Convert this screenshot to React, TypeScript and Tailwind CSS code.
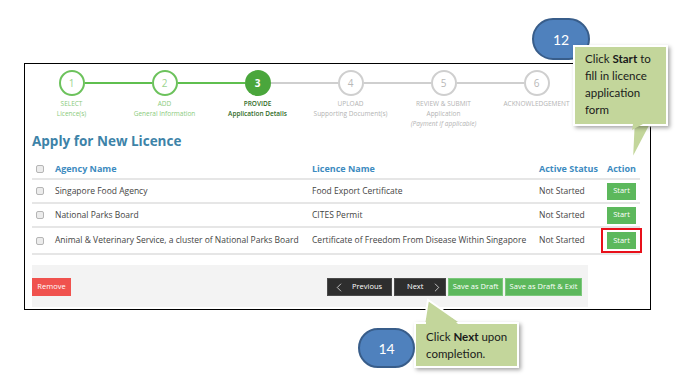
import { ChevronLeft, ChevronRight } from "lucide-react";

interface Step {
  num: number;
  lines: string[];
  note?: string;
  state: "done" | "active" | "todo";
}

interface Licence {
  agency: string;
  licence: string;
  status: string;
}

const steps: Step[] = [
  { num: 1, lines: ["SELECT", "Licence(s)"], state: "done" },
  { num: 2, lines: ["ADD", "General Information"], state: "done" },
  { num: 3, lines: ["PROVIDE", "Application Details"], state: "active" },
  { num: 4, lines: ["UPLOAD", "Supporting Document(s)"], state: "todo" },
  { num: 5, lines: ["REVIEW & SUBMIT", "Application"], note: "(Payment if applicable)", state: "todo" },
  { num: 6, lines: ["ACKNOWLEDGEMENT"], state: "todo" },
];

const licences: Licence[] = [
  { agency: "Singapore Food Agency", licence: "Food Export Certificate", status: "Not Started" },
  { agency: "National Parks Board", licence: "CITES Permit", status: "Not Started" },
  {
    agency: "Animal & Veterinary Service, a cluster of National Parks Board",
    licence: "Certificate of Freedom From Disease Within Singapore",
    status: "Not Started",
  },
];

function Checkbox() {
  return <span className="block w-[8px] h-[8px] rounded-[2px] border border-[#b5b5b5] bg-[#ececec]" />;
}

function StepItem({ step, index }: { step: Step; index: number }) {
  const leftGreen = index <= 2;
  const rightGreen = index <= 1;
  return (
    <div className="w-[93px] flex flex-col items-center">
      <div className="w-full flex items-center">
        <div className={`flex-1 h-[2px] ${index === 0 ? "" : leftGreen ? "bg-[#5fbf4f]" : "bg-[#cfcfcf]"}`} />
        <div
          className={`w-[26px] h-[26px] rounded-full flex items-center justify-center text-[10px] ${
            step.state === "active"
              ? "bg-[#4aa63c] text-white font-bold"
              : step.state === "done"
              ? "border-2 border-[#6cc25c] text-[#9bd48e] bg-white"
              : "border-2 border-[#cfcfcf] text-[#b8b8b8] bg-white"
          }`}
        >
          {step.num}
        </div>
        <div className={`flex-1 h-[2px] ${index === 5 ? "" : rightGreen ? "bg-[#5fbf4f]" : "bg-[#cfcfcf]"}`} />
      </div>
      <div
        className={`mt-[3px] text-[6.5px] leading-[10px] text-center whitespace-nowrap ${
          step.state === "active" ? "text-[#2f6b27] font-semibold" : step.state === "done" ? "text-[#8acb7c]" : "text-[#b3b3b3]"
        }`}
      >
        {step.lines.map((l) => (
          <div key={l}>{l}</div>
        ))}
        {step.note && <div className="italic">{step.note}</div>}
      </div>
    </div>
  );
}

function StartButton() {
  return (
    <span className="inline-flex items-center justify-center w-[29px] h-[17px] bg-[#5cb85c] text-white text-[7.5px] align-middle">
      Start
    </span>
  );
}

function App() {
  return (
    <div className="relative w-[686px] h-[386px] bg-white font-['Open_Sans',sans-serif] overflow-hidden">
      <div className="pt-[63px] pl-[24px]">
        <div className="w-[627px] h-[247px] border-[1.5px] border-black">
          <div className="flex pt-[6px]">
            {steps.map((s, i) => (
              <StepItem key={s.num} step={s} index={i} />
            ))}
          </div>

          <div className="pl-[7px] pr-[8px]">
            <h1 className="mt-[3px] text-[13.5px] leading-[18px] font-bold text-[#3d83a8]">Apply for New Licence</h1>

            <table className="mt-[9px] w-[608px] table-fixed text-[8.5px] text-[#444] border-collapse">
              <colgroup>
                <col className="w-[23px]" />
                <col className="w-[257px]" />
                <col className="w-[227px]" />
                <col className="w-[68px]" />
                <col className="w-[33px]" />
              </colgroup>
              <thead>
                <tr className="h-[20px] border-b-2 border-[#e6e6e6] text-[9px] font-bold text-[#3d8bc0] text-left">
                  <th className="pl-[4px]">
                    <Checkbox />
                  </th>
                  <th>Agency Name</th>
                  <th>Licence Name</th>
                  <th className="whitespace-nowrap">Active Status</th>
                  <th>Action</th>
                </tr>
              </thead>
              <tbody>
                {licences.map((row, i) => (
                  <tr key={i} className="h-[24px] border-b-2 border-[#e6e6e6]">
                    <td className="pl-[4px]">
                      <Checkbox />
                    </td>
                    <td className="whitespace-nowrap">{row.agency}</td>
                    <td className="whitespace-nowrap">{row.licence}</td>
                    <td className="whitespace-nowrap">{row.status}</td>
                    <td className="whitespace-nowrap">
                      {i === 2 ? (
                        <span className="inline-block -ml-[6px] pl-[4px] pr-[4px] pt-[2px] pb-[2px] border-2 border-[#e8101a]">
                          <StartButton />
                        </span>
                      ) : (
                        <StartButton />
                      )}
                    </td>
                  </tr>
                ))}
              </tbody>
            </table>

            <div className="mt-[10px] w-[556px] h-[42px] bg-[#f3f3f3] flex items-center justify-between pr-[6px] pt-[2px]">
              <button className="h-[18px] w-[39px] bg-[#f0524e] text-white text-[7.5px]">Remove</button>
              <div className="flex gap-[2px]">
                <button className="h-[18px] w-[65px] bg-[#2e2e2e] border border-[#4a4a4a] text-white text-[7.5px] flex items-center pl-[4px] gap-[6px]">
                  <ChevronLeft className="w-[14px] h-[17px]" strokeWidth={1.2} />
                  Previous
                </button>
                <button className="h-[18px] w-[52px] bg-[#2e2e2e] border border-[#4a4a4a] text-white text-[7.5px] flex items-center pl-[12px] gap-[7px]">
                  Next
                  <ChevronRight className="w-[14px] h-[17px]" strokeWidth={1.2} />
                </button>
                <button className="h-[18px] w-[55px] bg-[#5cb85c] border border-[#7cc87c] text-white text-[7.5px]">Save as Draft</button>
                <button className="h-[18px] w-[77px] bg-[#5cb85c] border border-[#7cc87c] text-white text-[7.5px]">Save as Draft &amp; Exit</button>
              </div>
            </div>
          </div>
        </div>
      </div>

      {/* callout 12 */}
      <div className="absolute left-[532px] top-[18px] w-[58px] h-[42px] rounded-full bg-[#4f81bd] border-2 border-[#385d8a] flex items-center justify-center text-white text-[14px] font-['Lato',sans-serif]">
        12
      </div>
      <svg className="absolute left-[620px] top-[118px]" width="40" height="46" viewBox="0 0 40 46">
        <path d="M14 0 L12 42 L34 0 Z" fill="#c3d69b" stroke="white" strokeWidth="2" />
      </svg>
      <div className="absolute left-[573px] top-[45px] w-[95px] h-[81px] bg-[#c3d69b] border-2 border-white shadow-[2px_2px_4px_rgba(0,0,0,0.35)] pl-[10px] pt-[3px] text-[11.5px] leading-[17px] text-[#1a1a1a] whitespace-nowrap font-['Lato',sans-serif]">
        Click <span className="font-bold">Start</span> to
        <br />
        fill in licence
        <br />
        application
        <br />
        form
      </div>
      <svg className="absolute left-[626px] top-[118px]" width="30" height="12" viewBox="0 0 30 12">
        <path d="M8 0 L6 12 L28 0 Z" fill="#c3d69b" />
      </svg>

      {/* callout 14 */}
      <svg className="absolute left-[420px] top-[297px]" width="50" height="30" viewBox="0 0 50 30">
        <path d="M8 3 L4 28 L44 28 Z" fill="#c3d69b" stroke="white" strokeWidth="2" />
      </svg>
      <div className="absolute left-[414px] top-[322px] w-[105px] h-[46px] bg-[#c3d69b] border-2 border-white shadow-[2px_2px_4px_rgba(0,0,0,0.35)] pl-[10px] pt-[4px] text-[11.5px] leading-[17px] text-[#1a1a1a] whitespace-nowrap font-['Lato',sans-serif]">
        Click <span className="font-bold">Next</span> upon
        <br />
        completion.
      </div>
      <svg className="absolute left-[422px] top-[318px]" width="40" height="8" viewBox="0 0 40 8">
        <path d="M4 0 L4 8 L38 8 L30 0 Z" fill="#c3d69b" />
      </svg>
      <div className="absolute left-[358px] top-[328px] w-[57px] h-[40px] rounded-full bg-[#4f81bd] border-2 border-[#385d8a] flex items-center justify-center text-white text-[14px] font-['Lato',sans-serif]">
        14
      </div>
    </div>
  );
}

export default App;
